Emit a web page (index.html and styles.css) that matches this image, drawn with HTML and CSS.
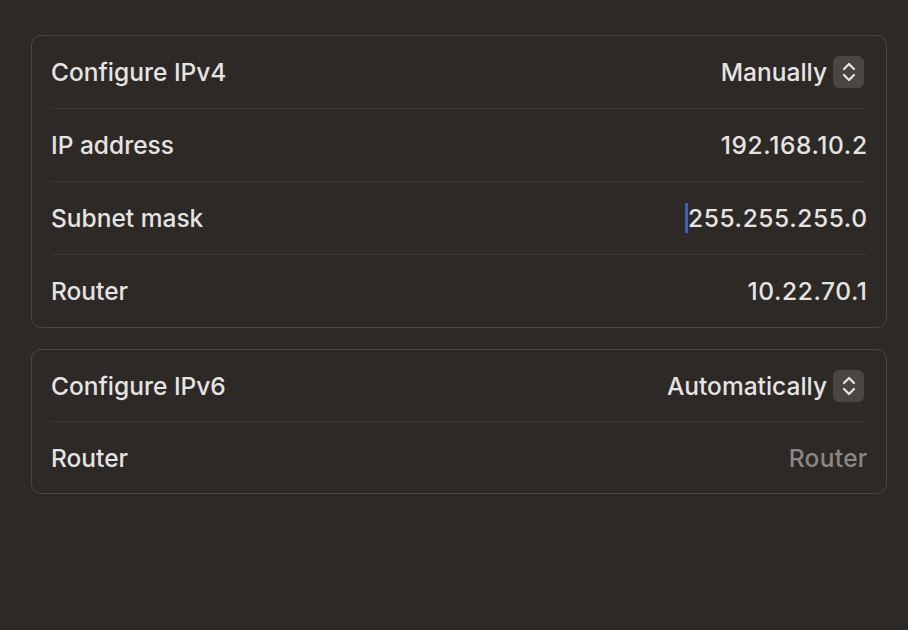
FILE: index.html
```html
<!DOCTYPE html>
<html lang="en">
<head>
  <meta charset="UTF-8">
  <meta name="viewport" content="width=device-width, initial-scale=1.0">
  <title>Network Settings</title>
  <link rel="stylesheet" href="styles.css">
</head>
<body>
  <div class="page">
    <!-- IPv4 -->
    <div class="group">
      <div class="row">
        <span class="label">Configure IPv4</span>
        <div class="select">
          <span>Manually</span>
          <span class="stepper">
            <svg width="16" height="24" viewBox="0 0 16 24"><path d="M3 9 L8 4 L13 9 M3 15 L8 20 L13 15" fill="none" stroke="#e6e4e2" stroke-width="2.2" stroke-linecap="round" stroke-linejoin="round"/></svg>
          </span>
        </div>
      </div>
      <div class="row">
        <span class="label">IP address</span>
        <span class="value">192.168.10.2</span>
      </div>
      <div class="row">
        <span class="label">Subnet mask</span>
        <span class="value"><span class="caret"></span>255.255.255.0</span>
      </div>
      <div class="row">
        <span class="label">Router</span>
        <span class="value">10.22.70.1</span>
      </div>
    </div>

    <!-- IPv6 -->
    <div class="group short">
      <div class="row">
        <span class="label">Configure IPv6</span>
        <div class="select">
          <span>Automatically</span>
          <span class="stepper">
            <svg width="16" height="24" viewBox="0 0 16 24"><path d="M3 9 L8 4 L13 9 M3 15 L8 20 L13 15" fill="none" stroke="#e6e4e2" stroke-width="2.2" stroke-linecap="round" stroke-linejoin="round"/></svg>
          </span>
        </div>
      </div>
      <div class="row">
        <span class="label">Router</span>
        <span class="value placeholder">Router</span>
      </div>
    </div>
  </div>
</body>
</html>
```

FILE: styles.css
```css
body {
  margin: 0;
  background: #2c2926;
  font-family: 'Inter', 'Noto Sans', sans-serif;
  color: #e6e4e2;
}

.page {
  padding: 35px 21px 0 31px;
  display: flex;
  flex-direction: column;
  gap: 21px;
}

.group {
  border: 1px solid #4a4643;
  border-radius: 10px;
  padding: 0 19px;
}

.row {
  height: 72px;
  display: flex;
  align-items: center;
  justify-content: space-between;
  border-bottom: 1px solid #3b3835;
  font-size: 24.5px;
  font-weight: 500;
}

.group.short .row {
  height: 71px;
}

.row:last-child {
  border-bottom: none;
}

.label {
  color: #e6e4e2;
}

.value {
  display: flex;
  align-items: center;
  letter-spacing: 0.6px;
  margin-right: -0.6px;
}

.placeholder {
  color: #8b8784;
  letter-spacing: 0.3px;
}

.caret {
  width: 3px;
  height: 30px;
  background: #3b5fb3;
  margin-right: 0;
}

.select {
  display: flex;
  align-items: center;
  gap: 6px;
  margin-right: 3px;
}

.stepper {
  width: 31px;
  height: 32px;
  border-radius: 6px;
  background: #4a4643;
  display: flex;
  align-items: center;
  justify-content: center;
}
```
